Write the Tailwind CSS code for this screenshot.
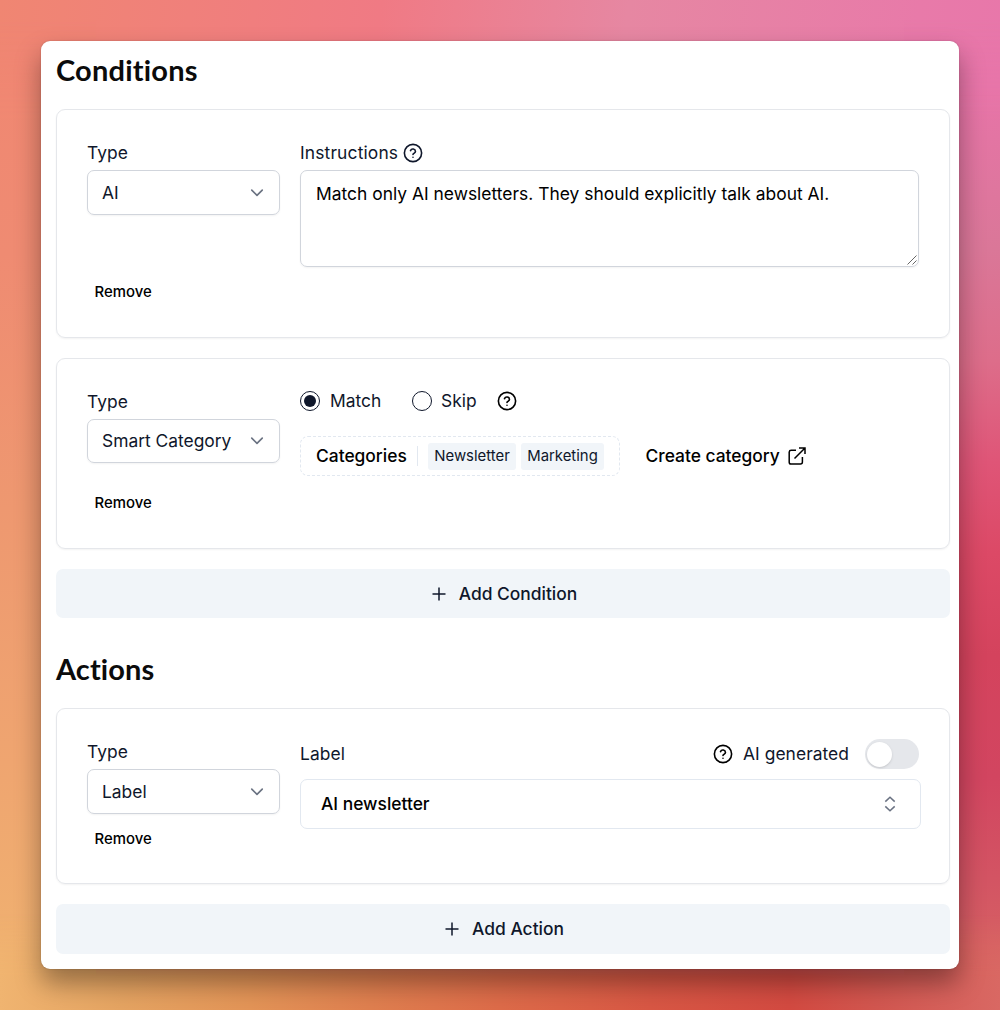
<!DOCTYPE html>
<html lang="en">
<head>
<meta charset="utf-8">
<title>Rule editor</title>
<script src="https://cdn.jsdelivr.net/npm/@tailwindcss/browser@4"></script>
</head>
<body class="h-[1010px] w-[1000px] overflow-hidden bg-[linear-gradient(97deg,#f08672_0%,#f07a84_34%,#e687a2_56%,#e87aa9_82%,#e873ab_100%)] font-['Inter',sans-serif] text-[17.4px] leading-6 text-slate-900">
<svg class="hidden">
  <symbol id="help" viewBox="0 0 24 24" fill="none" stroke="currentColor" stroke-width="1.75" stroke-linecap="round" stroke-linejoin="round"><circle cx="12" cy="12" r="9.4"/><path d="M9.3 9.4a2.8 2.8 0 0 1 5.4 .9c0 1.8-2.7 2.2-2.7 3.2M12 16.6h.01"/></symbol>
  <symbol id="chev" viewBox="0 0 24 24" fill="none" stroke="currentColor" stroke-width="2.8" stroke-linecap="round" stroke-linejoin="round"><path d="m3 7 9 9 9-9"/></symbol>
  <symbol id="plus" viewBox="0 0 16 16" fill="none" stroke="currentColor" stroke-width="1.5"><path d="M8 1.5v13M1.5 8h13"/></symbol>
</svg>
<div class="absolute inset-y-0 right-0 w-24 bg-[linear-gradient(177deg,#e873ab_0%,#e774a8_9%,#da7798_25%,#dd6d8a_36%,#df5577_46%,#dc4966_55%,#d4435d_65%,#d24560_77%,#d35463_87%,#d96a64_100%)] [mask-image:linear-gradient(180deg,transparent_2%,black_12%)]"></div>
<div class="absolute inset-y-0 left-0 w-24 bg-[linear-gradient(176deg,#f08672_0%,#ef8b72_25%,#ee9870_50%,#efa570_75%,#f0b470_100%)] [mask-image:linear-gradient(180deg,transparent_2%,black_12%)]"></div>
<div class="absolute inset-x-0 bottom-0 h-24 bg-[linear-gradient(90deg,#f0b470_0%,#e5a462_12%,#e39457_25%,#df7f4f_37%,#dd6b49_50%,#d85744_65%,#d34a41_79%,#d25750_88%,#d96863_100%)] [mask-image:linear-gradient(0deg,black_35%,transparent)]"></div>
<main class="absolute left-[41px] top-[41px] flex h-[928px] w-[918px] flex-col rounded-[9px] bg-white pl-[15px] pr-[9px] shadow-[0_14px_26px_rgba(0,0,0,0.36),0_0_2px_rgba(0,0,0,0.2)]">
  <h2 class="mt-[9px] h-[40px] font-['Lato',sans-serif] text-[29px] font-bold leading-[40px] tracking-[0.2px] text-[#0b0b0b] [font-variant-ligatures:none]">Conditions</h2>

  <section class="mt-[19px] flex h-[229px] shrink-0 gap-5 rounded-[9px] border border-gray-200 px-[30px] pt-[31px] shadow-xs">
    <div class="w-[193px] shrink-0">
      <div class="tracking-[0.1px]">Type</div>
      <div class="mt-[5px] flex h-[45px] items-center justify-between rounded-[7px] border border-gray-300 pl-[14px] pr-[15px] shadow-xs"><span>AI</span><svg class="size-[14px] text-gray-500"><use href="#chev"/></svg></div>
      <button class="ml-[7.5px] mt-[65px] block text-[14.9px] font-medium leading-6 text-black">Remove</button>
    </div>
    <div class="w-[619px] shrink-0">
      <div class="flex items-center gap-[4px]"><span class="tracking-[0.15px]">Instructions</span><svg class="size-[22px]"><use href="#help"/></svg></div>
      <div class="relative mt-[5px] h-[97px] rounded-[7px] border border-gray-300 px-[15px] pt-[11px] tracking-[0.015px] text-black shadow-xs">Match only AI newsletters. They should explicitly talk about AI.
        <svg class="absolute bottom-px right-px size-[10px]" viewBox="0 0 10 10" stroke="#666" stroke-width="1"><path d="M.5 9.5 9.5.5M5.5 9.5l4-4"/></svg>
      </div>
    </div>
  </section>

  <section class="mt-5 flex h-[191px] shrink-0 gap-5 rounded-[9px] border border-gray-200 px-[30px] pt-[30px] shadow-xs">
    <div class="w-[193px] shrink-0">
      <div class="pt-px tracking-[0.1px]">Type</div>
      <div class="mt-[5px] flex h-[44px] items-center justify-between rounded-[7px] border border-gray-300 pl-[14px] pr-[15px] shadow-xs"><span>Smart Category</span><svg class="size-[14px] text-gray-500"><use href="#chev"/></svg></div>
      <button class="ml-[7.5px] mt-[28px] block text-[14.9px] font-medium leading-6 text-black">Remove</button>
    </div>
    <div class="w-[621px] shrink-0">
      <div class="flex items-center">
        <span class="flex size-5 items-center justify-center rounded-full border border-slate-900"><span class="size-3 rounded-full bg-slate-900"></span></span>
        <span class="ml-[10px] w-[82px]">Match</span>
        <span class="size-5 rounded-full border border-slate-900"></span>
        <span class="ml-[9px] w-[55px]">Skip</span>
        <svg class="size-[22px] text-black"><use href="#help"/></svg>
      </div>
      <div class="mt-[23px] flex items-center">
        <div class="flex h-10 w-[320px] items-center rounded-[8px] border border-dashed border-slate-200 pl-[15px]">
          <span class="w-[101px] font-medium text-black">Categories</span>
          <span class="h-5 w-px bg-slate-200"></span>
          <span class="ml-[10px] flex h-[27px] w-[88px] items-center justify-center rounded-[3px] bg-slate-100 text-[14.9px]">Newsletter</span>
          <span class="ml-[5px] flex h-[27px] w-[83px] items-center justify-center rounded-[3px] bg-slate-100 text-[14.9px]">Marketing</span>
        </div>
        <span class="ml-[25.5px] font-medium text-black">Create category</span>
        <svg class="ml-[7px] size-[20px] text-black" viewBox="0 0 20 20" fill="none" stroke="currentColor" stroke-width="1.5"><path d="M9 4.2H4.2A2 2 0 0 0 2.2 6v10.2a1.8 1.8 0 0 0 1.8 1.8h9.4a2 2 0 0 0 2-2v-5M7.5 12.5 18 2M12 2h6v6"/></svg>
      </div>
    </div>
  </section>

  <button class="mt-5 flex h-[49px] shrink-0 items-center justify-center rounded-[7px] bg-slate-100 pl-[2px] font-medium"><svg class="mr-[12px] size-4"><use href="#plus"/></svg>Add Condition</button>

  <h2 class="mt-[31px] h-[40px] font-['Lato',sans-serif] text-[29px] font-bold leading-[40px] tracking-[0.1px] text-[#0b0b0b] [font-variant-ligatures:none]">Actions</h2>

  <section class="mt-[19px] flex h-[176px] shrink-0 gap-5 rounded-[9px] border border-gray-200 px-[30px] pt-[30px] shadow-xs">
    <div class="w-[193px] shrink-0">
      <div class="pt-px tracking-[0.1px]">Type</div>
      <div class="mt-[5px] flex h-[45px] items-center justify-between rounded-[7px] border border-gray-300 pl-[14px] pr-[15px] shadow-xs"><span>Label</span><svg class="size-[14px] text-gray-500"><use href="#chev"/></svg></div>
      <button class="ml-[7.5px] mt-[13px] block text-[14.9px] font-medium leading-6 text-black">Remove</button>
    </div>
    <div class="w-[621px] shrink-0">
      <div class="flex h-[30px] items-center pr-[2px]">
        <span class="mr-auto tracking-[0.1px]">Label</span>
        <svg class="mr-[9px] size-[22px] text-black"><use href="#help"/></svg>
        <span class="tracking-[0.05px]">AI generated</span>
        <span class="ml-[16px] flex h-[30px] w-[54px] items-center rounded-full bg-gray-200 pl-[2px]"><span class="size-[25px] rounded-full bg-white shadow-sm"></span></span>
      </div>
      <div class="mt-[10px] flex h-[50px] items-center justify-between rounded-[7px] border border-slate-200 pl-5 pr-[24px] font-medium text-black"><span>AI newsletter</span>
        <svg class="h-4 w-3 text-gray-500" viewBox="0 0 12 16" fill="none" stroke="currentColor" stroke-width="1.5"><path d="m1.3 5.6 4.7-4.4 4.7 4.4M1.3 10.4l4.7 4.4 4.7-4.4"/></svg>
      </div>
    </div>
  </section>

  <button class="mt-5 flex h-[50px] shrink-0 items-center justify-center rounded-[7px] bg-slate-100 pl-[2px] font-medium"><svg class="mr-[12px] size-4"><use href="#plus"/></svg>Add Action</button>
</main>
</body>
</html>
